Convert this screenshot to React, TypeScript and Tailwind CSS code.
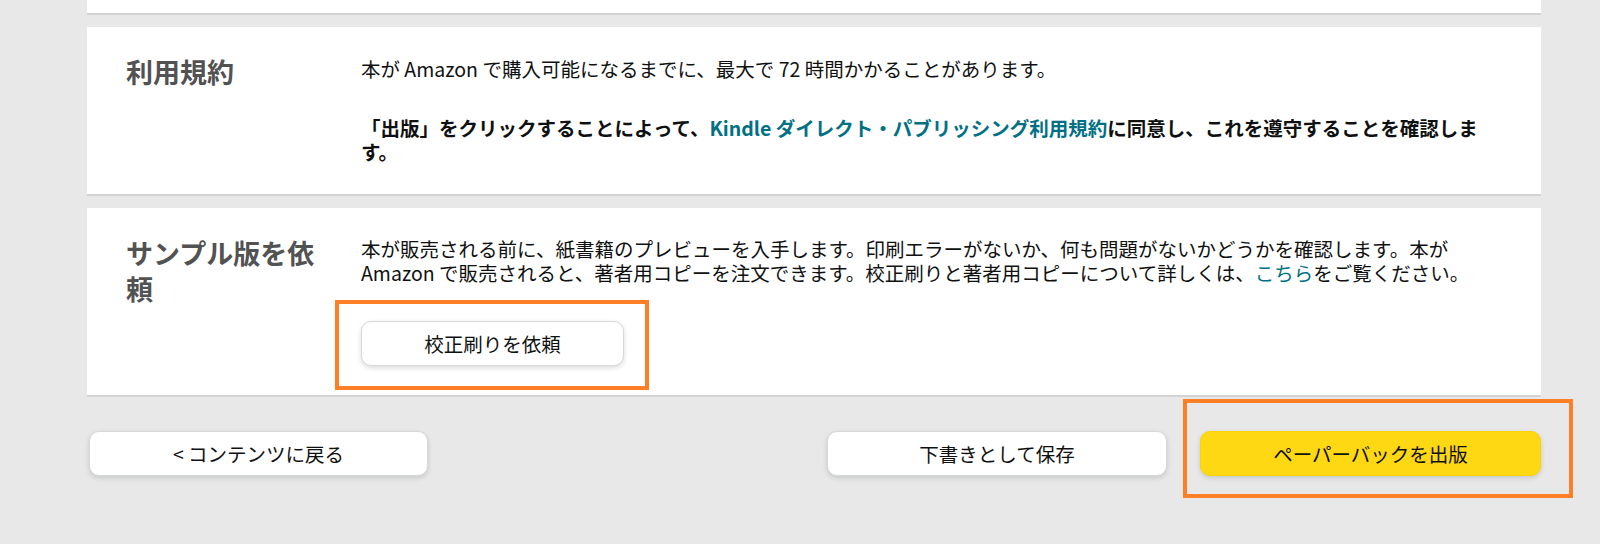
import React from "react";

const font = { fontFamily: '"Noto Sans CJK JP", "Noto Sans", sans-serif' };

function Card({
  title,
  children,
  pb = "pb-[30px]",
}: {
  title?: string;
  children?: React.ReactNode;
  pb?: string;
}) {
  return (
    <section
      className={
        "grid grid-cols-[200px_1fr] gap-x-[35px] border-b-2 border-[#d3d3d3] bg-white pl-[39px] pr-[54px] pt-[29px] " +
        pb
      }
    >
      <h3 className="-mt-[2px] text-[27px] font-bold leading-[36px] text-[#525252]">
        {title}
      </h3>
      <div className="text-[19.5px] leading-[24px] text-[#0f1111]">{children}</div>
    </section>
  );
}

function Btn({
  children,
  primary,
  className,
}: {
  children: React.ReactNode;
  primary?: boolean;
  className?: string;
}) {
  return (
    <button
      className={
        (primary
          ? "border-[#fcd200] bg-[#ffd814] "
          : "border-[#d5d9d9] bg-white ") +
        "h-[45px] rounded-[10px] border text-[19.5px] text-[#0f1111] shadow-[0_2px_5px_rgba(15,17,17,0.15)] " +
        (className ?? "")
      }
    >
      {children}
    </button>
  );
}

export default function App() {
  return (
    <div
      className="h-[544px] w-full overflow-hidden bg-[#e8e8e8] pl-[87px] pr-[59px]"
      style={font}
    >
      <div className="flex flex-col gap-[12px]">
        <div className="h-[15px] border-b-2 border-[#d3d3d3] bg-white" />

        <Card title="利用規約">
          <p className="mt-[1px]">
            本が Amazon で購入可能になるまでに、最大で 72 時間かかることがあります。
          </p>
          <p className="mt-[35px] font-bold">
            「出版」をクリックすることによって、
            <a className="text-[#007185]">Kindle ダイレクト・パブリッシング利用規約</a>
            に同意し、これを遵守することを確認します。
          </p>
        </Card>

        <Card title="サンプル版を依頼" pb="pb-[29px]">
          <p>
            本が販売される前に、紙書籍のプレビューを入手します。印刷エラーがないか、何も問題がないかどうかを確認します。本が
            Amazon で販売されると、著者用コピーを注文できます。校正刷りと著者用コピーについて詳しくは、
            <a className="text-[#007185]">こちら</a>をご覧ください。
          </p>
          <div className="relative mt-[36px] w-[263px]">
            <Btn className="w-[263px]">校正刷りを依頼</Btn>
            <div className="pointer-events-none absolute -bottom-[24px] -left-[26px] -right-[25px] -top-[21px] border-4 border-[#ff7f27]" />
          </div>
        </Card>
      </div>

      <div className="mt-[34px] flex items-center justify-between">
        <Btn className="ml-[2px] w-[339px]">&lt; コンテンツに戻る</Btn>
        <div className="flex gap-[33px]">
          <Btn className="w-[340px]">下書きとして保存</Btn>
          <div className="relative">
            <Btn primary className="w-[341px]">
              ペーパーバックを出版
            </Btn>
            <div className="pointer-events-none absolute -bottom-[22px] -left-[17px] -right-[32px] -top-[32px] border-4 border-[#ff7f27]" />
          </div>
        </div>
      </div>
    </div>
  );
}
